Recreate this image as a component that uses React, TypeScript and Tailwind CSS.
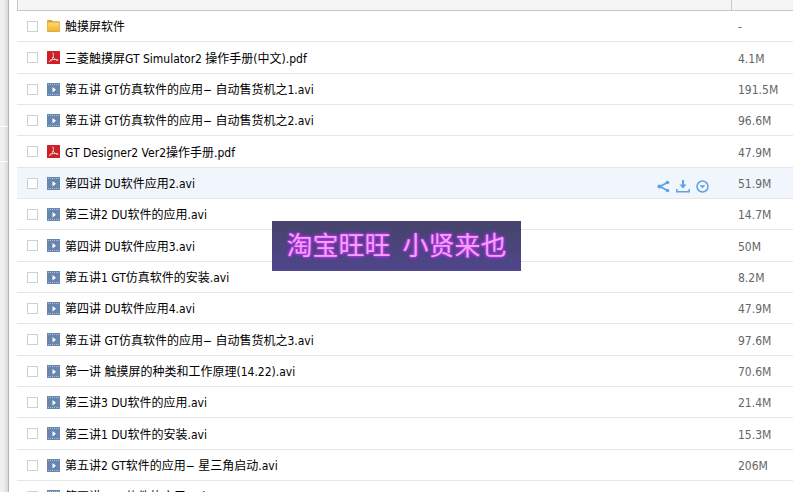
import { useState } from 'react';

type FileKind = 'folder' | 'pdf' | 'video';

interface FileItem {
  name: string;
  kind: FileKind;
  size: string;
}

const FILES: FileItem[] = [
  { name: '触摸屏软件', kind: 'folder', size: '-' },
  { name: '三菱触摸屏GT Simulator2 操作手册(中文).pdf', kind: 'pdf', size: '4.1M' },
  { name: '第五讲 GT仿真软件的应用− 自动售货机之1.avi', kind: 'video', size: '191.5M' },
  { name: '第五讲 GT仿真软件的应用− 自动售货机之2.avi', kind: 'video', size: '96.6M' },
  { name: 'GT Designer2 Ver2操作手册.pdf', kind: 'pdf', size: '47.9M' },
  { name: '第四讲 DU软件应用2.avi', kind: 'video', size: '51.9M' },
  { name: '第三讲2 DU软件的应用.avi', kind: 'video', size: '14.7M' },
  { name: '第四讲 DU软件应用3.avi', kind: 'video', size: '50M' },
  { name: '第五讲1 GT仿真软件的安装.avi', kind: 'video', size: '8.2M' },
  { name: '第四讲 DU软件应用4.avi', kind: 'video', size: '47.9M' },
  { name: '第五讲 GT仿真软件的应用− 自动售货机之3.avi', kind: 'video', size: '97.6M' },
  { name: '第一讲 触摸屏的种类和工作原理(14.22).avi', kind: 'video', size: '70.6M' },
  { name: '第三讲3 DU软件的应用.avi', kind: 'video', size: '21.4M' },
  { name: '第三讲1 DU软件的安装.avi', kind: 'video', size: '15.3M' },
  { name: '第五讲2 GT软件的应用− 星三角启动.avi', kind: 'video', size: '206M' },
  { name: '第四讲1 GT软件的应用.avi', kind: 'video', size: '48M' },
];

function FileIcon({ kind }: { kind: FileKind }) {
  if (kind === 'folder') {
    return (
      <svg width="13" height="13" viewBox="0 0 13 13" className="shrink-0">
        <defs>
          <linearGradient id="folder" x1="0" y1="0" x2="0" y2="1">
            <stop offset="0" stopColor="#fdd968" />
            <stop offset="1" stopColor="#f0b038" />
          </linearGradient>
        </defs>
        <path d="M0 1q0-1 1-1h3.800l1.200 1.200h6q1 0 1 1v8.800q0 1-1 1h-11q-1 0-1-1z" fill="#dca33a" />
        <path d="M.5 2.500h12v8.200q0 .8-.8.8h-10.400q-.8 0-.8-.8z" fill="url(#folder)" />
      </svg>
    );
  }
  if (kind === 'pdf') {
    return (
      <svg width="13" height="13" viewBox="0 0 13 13" className="shrink-0">
        <rect width="13" height="13" rx=".5" fill="#cb2128" />
        <path
          d="M6 2c.7 1.800.5 3.700-.4 5.300C4.800 8.900 3.700 10 2.300 10.500M6 6.300c.9 1.400 2.400 2.500 4.800 3M3.400 9.200c2-.8 4.500-1 7.200-.3"
          fill="none"
          stroke="#f8d4d4"
          strokeWidth="1"
          strokeLinecap="round"
        />
      </svg>
    );
  }
  return (
    <svg width="13" height="13" viewBox="0 0 13 13" className="shrink-0">
      <rect width="13" height="13" fill="#6686ae" />
      <path d="M1 1.500h11M1 11.500h11" stroke="#a9bdd6" strokeWidth="1" strokeDasharray="1 1" />
      <path d="M5.500 4l3.500 2.700-3.500 2.800z" fill="#fff" />
    </svg>
  );
}

function RowActions() {
  return (
    <div className="flex items-center gap-1.5 pt-1.5 pr-[22px] text-[#5fa2e2]">
      <button type="button" aria-label="分享">
        <svg width="13" height="13" viewBox="0 0 13 13" className="block">
          <path d="M10.500 2.500L3 6.500l7.500 4" fill="none" stroke="currentColor" strokeWidth="1.800" />
          <circle cx="10.500" cy="2.500" r="1.800" fill="currentColor" />
          <circle cx="2.500" cy="6.500" r="2.100" fill="currentColor" />
          <circle cx="10.500" cy="10.500" r="1.800" fill="currentColor" />
        </svg>
      </button>
      <button type="button" aria-label="下载">
        <svg width="14" height="13" viewBox="0 0 14 13" className="block">
          <path d="M7 0v6" stroke="currentColor" strokeWidth="2" />
          <path d="M3.500 4.500h7L7 8.500z" fill="currentColor" />
          <path d="M.8 9v2.800h12.400V9" fill="none" stroke="currentColor" strokeWidth="1.500" />
        </svg>
      </button>
      <button type="button" aria-label="更多">
        <svg width="13" height="13" viewBox="0 0 13 13" className="block">
          <circle cx="6.500" cy="6.500" r="5.500" fill="none" stroke="currentColor" strokeWidth="1.500" />
          <path d="M3.500 5.200h6l-3 3z" fill="currentColor" />
        </svg>
      </button>
    </div>
  );
}

export default function App() {
  const [selected, setSelected] = useState<string[]>([]);

  const toggle = (name: string) => {
    setSelected((prev) => (prev.includes(name) ? prev.filter((n) => n !== name) : [...prev, name]));
  };

  return (
    <div className="relative flex h-screen overflow-hidden bg-white font-['DejaVu_Sans_Condensed','DejaVu_Sans','Noto_Sans_CJK_SC',sans-serif] text-xs text-black">
      {/* Sidebar edge */}
      <aside className="flex w-[9px] shrink-0 flex-col border-r border-[#b4b4b4] bg-linear-to-r from-[#f0f0f0] from-40% to-[#d8d8d8]">
        <div className="h-[127px] border-b border-white" />
        <div className="h-[35px] border-b border-white" />
      </aside>

      {/* File list */}
      <main className="min-w-0 flex-1 pl-2">
        <table className="w-full table-fixed border-separate border-spacing-0">
          <thead>
            <tr className="h-[11px] bg-[#f5f5f5]">
              <th aria-label="文件名" className="border-b border-l border-[#c8c8c8] p-0" />
              <th aria-label="大小" className="w-[62px] border-b border-l border-[#c8c8c8] p-0" />
            </tr>
          </thead>
          <tbody>
            {FILES.map((file, i) => (
              <tr
                key={file.name}
                className={`h-[31px] nth-[3n+2]:h-8 ${i === 5 ? 'bg-[#f0f6fc]' : ''}`}
              >
                <td className="border-b border-[#e6e6e6] p-0">
                  <div className="flex items-center justify-between">
                    <label className="flex items-center pl-2.5">
                      <input
                        type="checkbox"
                        checked={selected.includes(file.name)}
                        onChange={() => toggle(file.name)}
                        className="mr-[9px] size-[11px] shrink-0 appearance-none border border-[#c9d2d2] bg-white checked:bg-[#5b9fe0]"
                      />
                      <FileIcon kind={file.kind} />
                      <span className="pt-0.5 pl-[5px] leading-4 whitespace-nowrap">{file.name}</span>
                    </label>
                    {i === 5 && <RowActions />}
                  </div>
                </td>
                <td className="border-b border-[#e6e6e6] p-0 pt-0.5 pl-[7px] leading-4 text-[#666]">{file.size}</td>
              </tr>
            ))}
          </tbody>
        </table>
      </main>

      {/* Watermark */}
      <div className="pointer-events-none absolute top-[221px] left-[272px] flex h-[50px] w-[249px] items-center justify-center gap-3 bg-linear-to-b from-[#46436b] to-[#4f468c] pb-1 font-['Noto_Sans_CJK_SC',sans-serif] text-[26px] text-[#f7a0fa] [text-shadow:0_0_2px_#b43ae6,0_0_2px_#b43ae6,0_0_3px_#b43ae6,0_0_4px_#a032d8]">
        <span>淘宝旺旺</span>
        <span>小贤来也</span>
      </div>
    </div>
  );
}
